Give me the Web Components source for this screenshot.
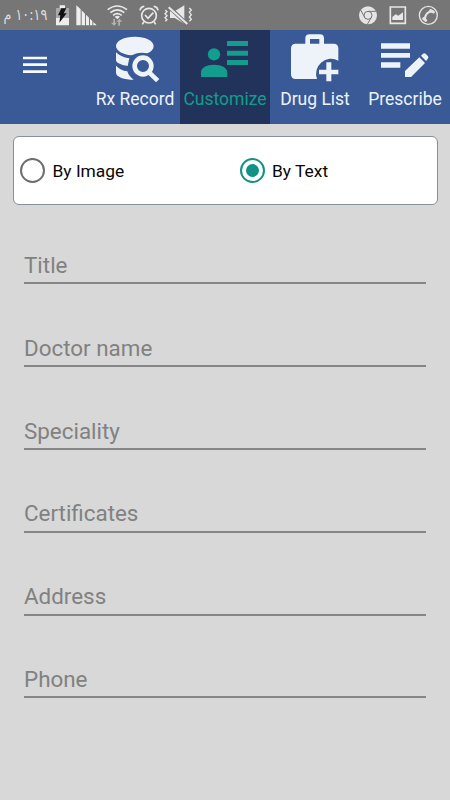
<!DOCTYPE html>
<html lang="en">
<head>
<meta charset="utf-8">
<title>Customize</title>
<style>
body{margin:0;background:#d8d8d8;font-family:Roboto,"Liberation Sans",sans-serif;width:450px;height:800px;overflow:hidden}
</style>
</head>
<body>
<rx-app></rx-app>
<script>
const define = (name, html) => customElements.define(name, class extends HTMLElement {
  constructor() {
    super();
    this.attachShadow({mode: 'open'}).innerHTML = typeof html === 'function' ? html(this) : html;
  }
});

define('status-bar', `
<style>
:host{display:flex;height:30px;background:#767676;color:#dedede;justify-content:space-between;box-sizing:border-box;padding:0 11px 0 2px}
.g{display:flex}
svg{display:block;height:30px;flex:none}
.time{width:46px;font:16px/29px "DejaVu Sans",sans-serif;direction:rtl;white-space:nowrap;display:flex;justify-content:center}
.time span{display:block;flex:none;transform:scaleX(.8)}
</style>
<div class="g">
  <div class="time"><span>١٠:١٩ م</span></div>
  <svg style="margin-left:8px" width="13" viewBox="168 0 39 90"><path fill="#eee" d="M179 16h16v8h12v52h-39V24h11z"/><path fill="#aaa" d="M168 24h39v30h-39z"/><path fill="#111" d="M184 25h15l-8 15h9L178 68l3-22h-7z"/></svg>
  <svg style="margin-left:7px" width="21" viewBox="230 0 63 90"><path fill="#eee" d="M231 16l13 12v48h-13zM247 31l10 10v35h-10zM260 44l9 9v23h-9zM272 56l7 7v13h-7zM282 66l10 10h-10z"/></svg>
  <svg style="margin-left:10px" width="21" viewBox="22 0 63 90"><g fill="none" stroke="#e8e8e8" stroke-width="5"><path d="M24 29Q53 7 82 29"/><path d="M32 38Q53 21 74 38" /><path d="M40 46Q53 36 66 46"/></g><path fill="#e8e8e8" d="M45 50q8-6 16 0l-8 8z"/><path fill="#b3b3b3" d="M41 56h5v12h6l-9 9-9-9h7zM61 77h-5V65h-6l9-9 9 9h-7z"/></svg>
  <svg style="margin-left:11px" width="20" viewBox="117 0 60 90"><g fill="none" stroke="#e8e8e8" stroke-width="5"><circle cx="147" cy="47" r="22"/><path d="M135 45l9 10 16-17M120 31q2-11 13-12M174 31q-2-11-13-12M132 65l-5 8M162 65l5 8"/></g></svg>
  <svg style="margin-left:5px" width="29" viewBox="193 0 87 90"><path fill="#e8e8e8" d="M211 34h14l29-18v55l-29-17h-14z"/><path d="M207 20l56 53" stroke="#767676" stroke-width="12"/><g fill="none" stroke="#e8e8e8" stroke-width="4"><path d="M207 22l56 50" stroke-width="6"/><path d="M197 30l5 5-6 6 6 6-6 6 6 6-5 5M269 24l6 6-6 7 6 7-6 7 6 7-6 6"/></g></svg>
</div>
<div class="g">
  <svg width="20" viewBox="56 0 60 90"><circle cx="86" cy="46" r="27" fill="#e4e4e4"/><g fill="none" stroke="#777" stroke-width="3"><circle cx="86" cy="46" r="12"/><path d="M86 34h24M76 52L64 30M96 52L84 73"/></g></svg>
  <svg style="margin-left:11px" width="18" viewBox="149 0 54 90"><path fill="none" stroke="#e8e8e8" stroke-width="5" d="M153 21h45v49h-45z"/><path fill="#e8e8e8" d="M159 60V51l10-8 8 4 14-10v23z"/></svg>
  <svg style="margin-left:11px" width="21" viewBox="235 0 63 90"><circle cx="266" cy="46" r="27" fill="none" stroke="#e4e4e4" stroke-width="4"/><path fill="none" stroke="#e4e4e4" stroke-width="6" d="M277 34Q258 36 255 58"/><path stroke="#e4e4e4" stroke-width="9" stroke-linecap="round" d="M273 32l8 4M252 56l6 5"/></svg>
</div>`);

const icons = {
  record: `<svg viewBox="270 0 270 186"><path d="M348 67c8 9 22 16 40 18l-5 23c-17-2-35-9-35-17zM348 107c8 9 20 15 34 17 3 10 9 18 19 25-27 0-53-8-53-21z"/><circle cx="429" cy="108" r="41" fill="#3a5997"/><path d="M348 48c0-16 24-28 56.500-28s56.500 12 56.500 28c0 9-7 17-19 22-20-5-36 0-47 6-27-2-47-14-47-28z"/><circle cx="429" cy="108" r="25" fill="none" stroke="currentColor" stroke-width="14"/><path d="M448 128l25 24" stroke="currentColor" stroke-width="14"/></svg>`,
  customize: `<svg viewBox="12 0 270 186"><circle cx="114" cy="73" r="18.500"/><path d="M75 141v-14c0-14 17-23 39-23s40 9 40 23v14zM153 33h63v15h-63zM153 62h63v15h-63zM153 90h63v15h-63z"/></svg>`,
  drugs: `<svg viewBox="0 0 270 186"><path fill-rule="evenodd" d="M106 41V25q0-12 12-12h32q12 0 12 12v16h29q14 0 14 14v37A45 45 0 0 0 141 147H77q-14 0-14-14V55q0-14 14-14zM120 41h28V27h-28z"/><path d="M169 97h15v22h21v14h-21v21h-15v-21h-22v-14h22z"/></svg>`,
  prescribe: `<svg viewBox="270 0 270 186"><path d="M333 40h87v16h-87zM333 69h87v14h-87zM333 97h58v16h-58zM405 123l43-41 17 17-42 42h-18zM453 77l6-6q4-3 8 0l7 8q3 4-1 8l-5 6z"/></svg>`
};

define('nav-tab', el => `
<style>
:host{display:flex;flex-direction:column;align-items:center;width:90px;height:93.500px;color:#edf3f8}
:host([active]){background:#21335a;color:#129d8e}
svg{display:block;width:90px;height:62px;fill:currentColor;flex:none}
span{font-size:17.500px;line-height:15px;white-space:nowrap}
</style>${icons[el.getAttribute('icon')]}<span><slot></slot></span>`);

define('app-header', `
<style>
:host{display:flex;height:93.500px;background:#3a5997}
.menu{width:90px;display:block;fill:#f6fbff}
</style>
<svg class="menu" viewBox="0 0 270 280.500"><path d="M69 80h72v8H69zM69 100h72v8H69zM69 121h72v8H69z"/></svg>
<slot></slot>`);

define('radio-option', `
<style>
:host{display:flex;align-items:center;gap:7.500px;flex:none;width:219.500px;font-size:17.400px;color:#080808}
i{box-sizing:border-box;width:25px;height:25px;border:2.500px solid #6e6e6e;border-radius:50%;display:grid;place-items:center}
:host([checked]) i{border-color:#129184}
:host([checked]) i::after{content:"";width:13px;height:13px;border-radius:50%;background:#129184}
span{white-space:nowrap;position:relative;top:1px}
</style><i></i><span><slot></slot></span>`);

define('radio-panel', `
<style>
:host{display:flex;box-sizing:border-box;height:69px;margin:12.500px 12.500px 0;padding:0 0 1px 6.500px;background:#fff;border:1px solid #82919c;border-radius:6px}
</style><slot></slot>`);

define('text-field', `
<style>
:host{display:flex;flex-direction:column;justify-content:flex-end;box-sizing:border-box;height:82.800px;color:#818181}
span{font-size:22.400px;line-height:26px;padding-bottom:4.400px}
hr{margin:0;border:0;height:2px;background:#868686;width:100%}
</style><span><slot></slot></span><hr>`);

define('rx-app', `
<style>
:host{display:block}
form{padding:0 24px;margin-top:-3.400px}
</style>
<status-bar></status-bar>
<app-header>
  <nav-tab icon="record">Rx Record</nav-tab>
  <nav-tab icon="customize" active>Customize</nav-tab>
  <nav-tab icon="drugs">Drug List</nav-tab>
  <nav-tab icon="prescribe">Prescribe</nav-tab>
</app-header>
<radio-panel><radio-option>By Image</radio-option><radio-option checked>By Text</radio-option></radio-panel>
<form>
  <text-field>Title</text-field>
  <text-field>Doctor name</text-field>
  <text-field>Speciality</text-field>
  <text-field>Certificates</text-field>
  <text-field>Address</text-field>
  <text-field>Phone</text-field>
</form>`);
</script>
</body>
</html>
